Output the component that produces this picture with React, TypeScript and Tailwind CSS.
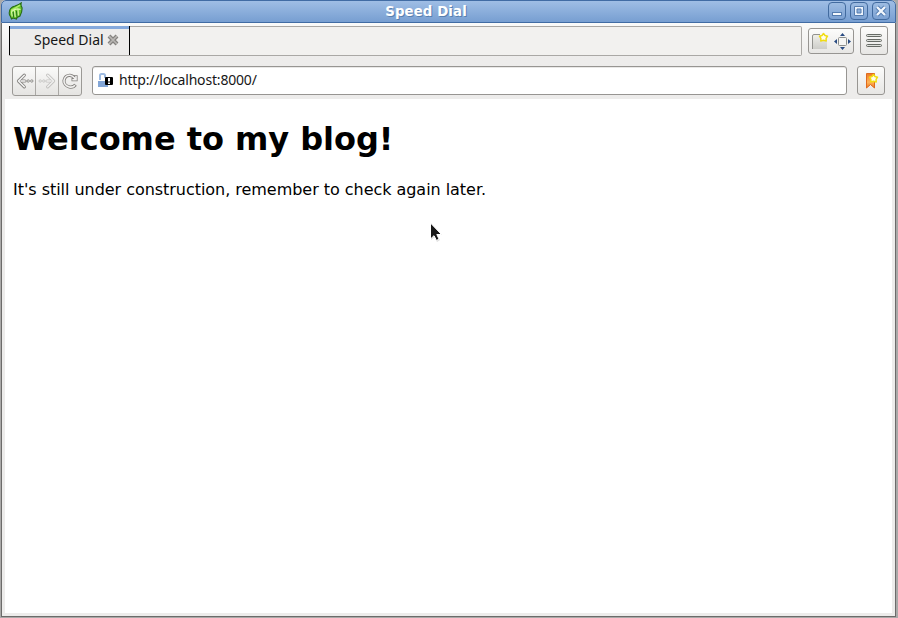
import React from "react";

const buttonLook =
  "border border-[#979592] bg-gradient-to-b from-[#fcfcfb] to-[#e7e6e4] flex items-center justify-center";

function Leaf() {
  return (
    <svg width="16" height="18" viewBox="0 0 16 18" className="shrink-0">
      <path d="M1.2 11C1.2 7 3 5 7 4C10 3 12 2 13.2 .8C12.8 3 13 4.5 14 5.5C14.5 9 13 12 12 14L9 15.5L8.5 17L5 16L3.5 17L2.5 14.5C1.5 13.5 1.2 12.5 1.2 11Z" fill="#67c32c" stroke="#286c16" strokeWidth="1.1" />
      <path d="M3 8.5Q8 6 12 3.2" stroke="#b0ef69" strokeWidth="1.6" fill="none" />
      <path d="M3.5 9.5L4.2 14.5M6.5 8.5L7.2 15M10 7.5L10.3 13.5M3.5 9.5Q8 5.5 12.5 7.5" stroke="#d9f8aa" strokeWidth="1.2" fill="none" />
      <path d="M5.2 10L5.7 15.5M8.5 9L8.9 14.5" stroke="#26761a" strokeWidth="1" fill="none" />
    </svg>
  );
}

function WindowButton({ children }: { children: React.ReactNode }) {
  return (
    <div className="h-[18px] w-[18px] rounded-[4px] border border-[#426b9f] bg-gradient-to-b from-[#9dbce2] to-[#7ca1d2]">
      <svg width="16" height="16" viewBox="0 0 16 16" fill="none">{children}</svg>
    </div>
  );
}

function Star({ x, y }: { x: number; y: number }) {
  return (
    <path
      transform={`translate(${x} ${y})`}
      d="M0-4L1.5-2L4-1.3L2.6 .8L2.7 3.5L0 2.8L-2.7 3.5L-2.6 .8L-4-1.3L-1.5-2Z"
      fill="#fffef0" stroke="#f1dc12" strokeWidth="1.5" strokeLinejoin="round"
    />
  );
}

function TitleBar() {
  return (
    <header className="flex h-[23px] items-start rounded-t-[5px] border-x border-t border-b border-[#416ca4] bg-gradient-to-b from-[#9fbee5] to-[#779ed1] pl-[6px] pr-[5px]">
      <div className="mt-[1px] w-[66px]"><Leaf /></div>
      <h1 className="flex-1 pt-px pr-[50px] text-center font-['DejaVu_Sans'] text-[13.33px] leading-[20px] font-bold tracking-[0.1px] whitespace-nowrap text-white [text-shadow:1px_1px_0_#587faf]">
        Speed Dial
      </h1>
      <div className="mt-[1px] flex gap-[4px]">
        <WindowButton>
          <rect x="3.5" y="9.5" width="9" height="3" fill="#f4f8fd" stroke="#547caf" />
        </WindowButton>
        <WindowButton>
          <path d="M3.5 3.5H12.5V12.5H3.5ZM6 6V10H10V6Z" stroke="#547caf" strokeWidth="1" fill="#edf4fc" fillRule="evenodd" />
        </WindowButton>
        <WindowButton>
          <path d="M4 4L12 12M12 4L4 12" stroke="#527bb0" strokeWidth="4.2" />
          <path d="M4 4L12 12M12 4L4 12" stroke="#f3f7fc" strokeWidth="2.4" />
        </WindowButton>
      </div>
    </header>
  );
}

function TabRow() {
  return (
    <div className="flex h-[33px] items-start pt-[3px] pl-[7px]">
      <div className="flex h-[30px] w-[793px] rounded-r-[2px] border border-l-0 border-[#aaa8a5] bg-[#f2f1ef]">
        <div className="-mt-px flex h-[29px] w-[121px] items-start border-x border-black bg-[#edeceb] shadow-[inset_0_3px_0_#85a9dc] pl-[24px]">
          <span className="w-[73px] pt-[5px] text-[14px] leading-[18px] whitespace-nowrap">Speed Dial</span>
          <svg width="12" height="12" viewBox="0 0 12 12" className="mt-[8px] shrink-0">
            <path d="M2 2L10 10M10 2L2 10" stroke="#858380" strokeWidth="4" />
            <path d="M2 2L10 10M10 2L2 10" stroke="#b9b7b4" strokeWidth="1.7" />
          </svg>
        </div>
      </div>
      <div className={buttonLook + " mt-[2px] ml-[6px] h-[26px] w-[46px] rounded-[3px]"}>
        <svg width="44" height="24" viewBox="0 0 44 24">
          <defs><linearGradient id="page" x2="0" y2="1"><stop stopColor="#efefe9" /><stop offset="1" stopColor="#cdcdc9" /></linearGradient></defs>
          <path d="M4 6H18V20H4Z" fill="url(#page)" />
          <path d="M3.5 20V7Q3.5 5.5 5 5.5H11" fill="none" stroke="#92928e" />
          <Star x={14.5} y={8.5} />
          <rect x="29.5" y="8.5" width="8" height="8" rx="1" fill="#f6f6f4" stroke="#8b8d8a" />
          <path d="M33.5 4L36 7H31ZM33.5 21L31 18H36ZM25 12.5L28 10V15ZM42 12.5L39 10V15Z" fill="#294b82" />
        </svg>
      </div>
      <div className={buttonLook + " ml-[6px] h-[29px] w-[28px] rounded-[3px]"}>
        <svg width="18" height="16" viewBox="0 0 18 16" fill="#dcdfda" stroke="#666a65">
          <rect x="1.5" y="1.5" width="15" height="2" rx="1" />
          <rect x="1.5" y="6.5" width="15" height="2" rx="1" />
          <rect x="1.5" y="11.5" width="15" height="2" rx="1" />
        </svg>
      </div>
    </div>
  );
}

function BackArrow() {
  return (
    <svg width="20" height="20" viewBox="0 0 20 20" fill="none">
      <path d="M9.3 4.2L3.5 10L9.3 15.8" stroke="#858380" strokeWidth="3.2" strokeLinecap="round" strokeLinejoin="round" />
      <path d="M9.3 4.2L3.5 10L9.3 15.8" stroke="#f5f5f4" strokeWidth="1.5" strokeLinecap="round" strokeLinejoin="round" />
      <path d="M7 10H10" stroke="#858380" strokeWidth="3.2" strokeLinecap="round" />
      <path d="M6 10H10" stroke="#f5f5f4" strokeWidth="1.5" strokeLinecap="round" />
      <g fill="#f5f5f4" stroke="#858380" strokeWidth=".9"><circle cx="13.2" cy="10" r="1.2" /><circle cx="16.8" cy="10" r="1.2" /></g>
    </svg>
  );
}

function NavRow() {
  return (
    <div className="flex h-[42px] items-start pt-[10px] pl-[10px]">
      <div className="flex h-[30px] w-[70px] rounded-[3px] border border-[#9b9996] bg-gradient-to-b from-[#fafaf9] to-[#e5e4e2]">
        <div className="flex w-[23px] items-center justify-center border-r border-[#aaa8a5] pl-px"><BackArrow /></div>
        <div className="flex w-[23px] items-center justify-center border-r border-[#aaa8a5]"><div className="-scale-x-100 opacity-40"><BackArrow /></div></div>
        <div className="flex w-[22px] items-center justify-center pr-px">
          <svg width="18" height="18" viewBox="0 0 18 18" fill="none">
            <path d="M14.5 12.7C13 14.8 10.8 15.4 8.3 14.9C5 14.1 2.7 11.5 3 8.5C3.5 5.2 6 3.1 9 3.3C11 3.5 12 4.2 13 5.2M15 3.2V7.7H10.5" stroke="#83817e" strokeWidth="3.2" />
            <path d="M14 13.2C12.7 14.8 10.8 15.4 8.3 14.9C5 14.1 2.7 11.5 3 8.5C3.5 5.2 6 3.1 9 3.3C11 3.5 12 4.2 13.5 6L14.8 7.5M15 4V7.7H11.3" stroke="#f2f1f0" strokeWidth="1.6" />
          </svg>
        </div>
      </div>
      <div className="ml-[10px] flex h-[29px] w-[755px] items-start rounded-[3px] border border-[#979592] bg-white pl-[5px] shadow-[inset_0_1px_0_#e9e8e7]">
        <svg width="16" height="17" viewBox="0 0 16 17" className="mt-[5px] shrink-0">
          <path d="M2 8V3.5Q2 2 3.5 2H5.5Q7 2 7 3.5V6" stroke="#9dbae1" strokeWidth="2" fill="none" />
          <path d="M0 9H10V15H0Z" fill="#83a6d7" />
          <rect x="7" y="5" width="8" height="8" rx="1" fill="black" />
          <path d="M10 6H12V9.5H10ZM10 10.5H12V12H10Z" fill="white" />
        </svg>
        <span className="ml-[5px] pt-[4px] text-[14px] leading-[18px] tracking-[-0.18px]">http://localhost:8000/</span>
      </div>
      <div className={buttonLook + " ml-[10px] h-[29px] w-[28px] rounded-[3px]"}>
        <svg width="16" height="20" viewBox="0 0 16 20">
          <defs><linearGradient id="ribbon" x2="0" y2="1"><stop stopColor="#ed7a22" /><stop offset=".6" stopColor="#ffb45c" /><stop offset="1" stopColor="#ef791c" /></linearGradient></defs>
          <path d="M3.5 2.5H11.5V17L7.5 13.5L3.5 17Z" fill="url(#ribbon)" stroke="#df6a1f" />
          <Star x={10.5} y={7.5} />
        </svg>
      </div>
    </div>
  );
}

export default function App() {
  return (
    <div className="relative h-[618px] w-[898px] overflow-hidden bg-[#aaa9a8] pl-px font-['Noto_Sans',sans-serif] text-[#171717]">
      <div className="flex h-[617px] w-[895px] flex-col rounded-t-[5px] bg-[#edeceb]">
        <TitleBar />
        <div className="flex h-[594px] flex-col border border-t-0 border-[#6c6b6a] bg-gradient-to-b from-[#fafaf9] via-[#edeceb] via-[6%] to-[#edeceb]">
          <TabRow />
          <NavRow />
          <main className="mx-[3px] mt-px h-[514px] bg-white px-[8px] font-['DejaVu_Sans',sans-serif] text-black">
            <h2 className="pt-[21px] text-[32px] leading-[38px] font-bold tracking-[-0.04px]">Welcome to my blog!</h2>
            <p className="mt-[22px] text-[16px] leading-[19px] tracking-[-0.037px]">It's still under construction, remember to check again later.</p>
          </main>
        </div>
      </div>
      <svg className="absolute top-[221px] left-[428px]" width="16" height="22" viewBox="0 0 16 22">
        <path d="M3 4V19L6.5 16L9 21L12 19L9 14H14Z" fill="#bbb" opacity=".5" />
        <path d="M2.5 2V18L6 14.7L8.5 19.5L11 18L8.8 13.5H13.5Z" fill="#171717" stroke="white" />
      </svg>
    </div>
  );
}
